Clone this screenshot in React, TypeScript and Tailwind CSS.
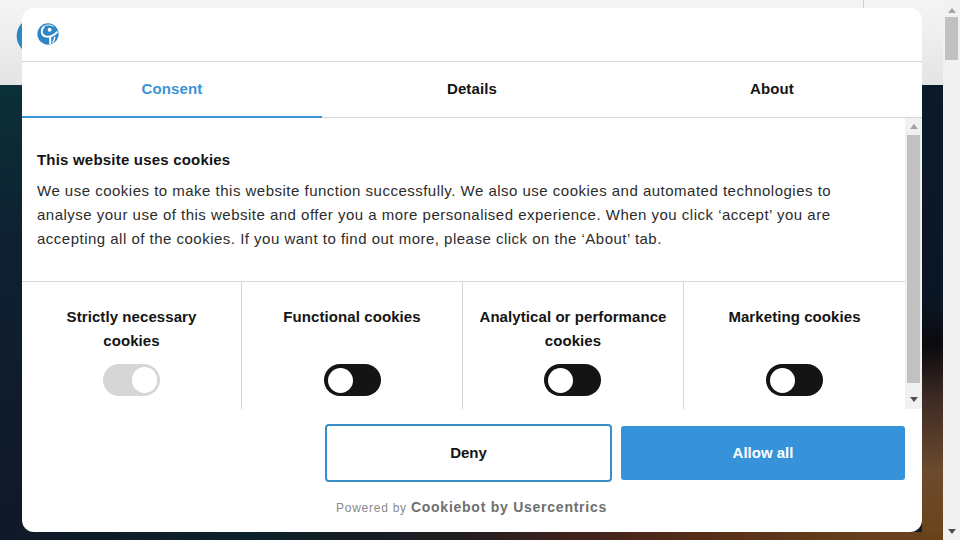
const Globe = ({ size, className }: { size: number; className?: string }) => (
  <svg width={size} height={size} viewBox="0 0 24 24" className={className} fill="none">
    <circle cx="12" cy="12" r="11.6" fill="#2f86c5" />
    <circle cx="13.8" cy="7.4" r="2.1" fill="#ffffff" />
    <path d="M8 3.6 C3.8 7 4.4 13.4 9 14.6 C13 15.6 18.4 13.8 22.4 9.4" stroke="#ffffff" strokeWidth="2" />
    <path d="M14.4 15 L14.4 23.2" stroke="#ffffff" strokeWidth="2.2" />
    <path d="M19.4 15 C19.2 17.6 18.4 19.6 17 21.4" stroke="#ffffff" strokeWidth="1.6" />
    <path d="M8 3.4 C11 1.6 15 1.8 18 3.6" stroke="#ffffff" strokeWidth="1" />
  </svg>
);

const Arrow = ({ up, className }: { up?: boolean; className?: string }) => (
  <svg width="8" height="5" viewBox="0 0 8 5" className={className}>
    <path d={up ? "M0 5 L4 0 L8 5 Z" : "M0 0 L8 0 L4 5 Z"} fill="currentColor" />
  </svg>
);

const Toggle = ({ on }: { on?: boolean }) =>
  on ? (
    <div className="w-[57px] h-8 rounded-full bg-[#d6d6d6] flex items-center justify-end pr-[3px]">
      <div className="w-[25px] h-[26px] rounded-full bg-white" />
    </div>
  ) : (
    <div className="w-[57px] h-8 rounded-full bg-[#141414] flex items-center pl-1">
      <div className="w-[25px] h-[25px] rounded-full bg-white" />
    </div>
  );

const cats: { title: string[]; on?: boolean; w: string; border: boolean; toggleClass: string }[] = [
  { title: ["Strictly necessary", "cookies"], on: true, w: "w-[220px]", border: true, toggleClass: "mt-[11px]" },
  { title: ["Functional cookies"], w: "w-[221px]", border: true, toggleClass: "mt-[11px]" },
  { title: ["Analytical or performance", "cookies"], w: "w-[221px]", border: true, toggleClass: "mt-[11px] mr-[1px]" },
  { title: ["Marketing cookies"], w: "w-[221px]", border: false, toggleClass: "mt-[11px]" },
];

export default function App() {
  return (
    <div
      className="relative w-[960px] h-[540px] overflow-hidden flex bg-[#f1f1f1] text-[#141414]"
      style={{ fontFamily: '"Liberation Sans", Arial, sans-serif' }}
    >
      <div className="w-[943px] flex flex-col">
        <div className="relative h-[85px] bg-gradient-to-b from-[#f5f5f5] to-[#e4e4e4]">
          <div className="absolute left-[16px] top-[17px]">
            <Globe size={38} />
          </div>
          <div className="absolute left-[863px] top-0 h-[10px] w-px bg-[#cfcfcf]" />
        </div>
        <div className="flex-1 bg-no-repeat bg-[image:linear-gradient(to_right,#10192a_0px,#0a2028_250px,#1f1d20_450px,#3c201c_560px,#552d18_700px,#643f1a_850px,#6a431c_943px),linear-gradient(#0c1a28_0px,#0b1624_215px,#0b0a0e_260px,#3e2b24_315px,#6b4a2e_385px,#6c431a_455px),linear-gradient(#0a3038_0px,#0f2030_165px,#101828_455px),linear-gradient(#0c1a28,#111a28)] bg-[length:100%_8px,21px_100%,22px_100%,100%_100%] bg-[position:left_bottom,right_top,left_top,left_top]" />
      </div>
      <div className="w-[17px] flex flex-col items-center bg-[#f1f1f1] text-[#a3a3a3]">
        <div className="h-[17px] flex items-center justify-center pt-1">
          <Arrow up />
        </div>
        <div className="w-[13px] h-[43px] bg-[#c1c1c1]" />
        <div className="flex-1" />
        <div className="h-[17px] flex items-center justify-center text-[#505050]">
          <Arrow />
        </div>
      </div>

      <div className="absolute left-[22px] top-[8px] w-[900px] h-[524px] bg-white rounded-xl flex flex-col overflow-hidden">
        <div className="h-[54px] shrink-0 flex items-center pl-[15px] pb-[1px] border-b border-[#d6d6d6]">
          <Globe size={22} />
        </div>
        <div className="h-[56px] shrink-0 flex border-b border-[#d6d6d6] text-[15px] font-bold tracking-[0.13px]">
          <div className="w-[300px] h-[56px] flex items-center justify-center text-[#3a94d8] border-b-2 border-[#3a94d8]">Consent</div>
          <div className="w-[300px] flex items-center justify-center">Details</div>
          <div className="w-[300px] flex items-center justify-center">About</div>
        </div>
        <div className="h-[291px] shrink-0 flex">
          <div className="w-[883px] flex flex-col">
            <div className="h-[164px] shrink-0 border-b border-[#d6d6d6] pl-[15px] pt-[29px]">
              <div className="text-[15px] leading-[26px] font-bold tracking-[0.2px]">This website uses cookies</div>
              <p className="mt-[6px] w-[830px] text-[15px] leading-6 tracking-[0.49px] text-[#2c2c2c]">
                We use cookies to make this website function successfully. We also use cookies and automated technologies to analyse your use of this website and offer you a more personalised experience. When you click ‘accept’ you are accepting all of the cookies. If you want to find out more, please click on the ‘About’ tab.
              </p>
            </div>
            <div className="flex-1 flex">
              {cats.map((c) => (
                <div
                  key={c.title[0]}
                  className={`${c.w} flex flex-col items-center pt-[23px] text-[15px] leading-6 font-bold tracking-[0.08px] ${c.border ? "border-r border-[#d6d6d6]" : ""}`}
                >
                  <div className="h-12 text-center">
                    {c.title.map((t) => (
                      <div key={t}>{t}</div>
                    ))}
                  </div>
                  <div className={c.toggleClass}>
                    <Toggle on={c.on} />
                  </div>
                </div>
              ))}
            </div>
          </div>
          <div className="w-[17px] flex flex-col items-center bg-[#f1f1f1]">
            <div className="h-[17px] flex items-center justify-center text-[#a3a3a3]">
              <Arrow up />
            </div>
            <div className="w-[13px] h-[248px] bg-[#c1c1c1]" />
            <div className="flex-1 flex items-center justify-center pt-[6px] text-[#505050]">
              <Arrow />
            </div>
          </div>
        </div>
        <div className="h-[88px] shrink-0 flex items-center justify-end pr-[17px] gap-[9px] text-[15px] font-bold">
          <div className="w-[287px] h-[58px] rounded border-2 border-[#3a8fc9] flex items-center justify-center">Deny</div>
          <div className="w-[284px] h-[54px] rounded-[3px] bg-[#3693da] text-white flex items-center justify-center">Allow all</div>
        </div>
        <div className="pl-[314px] flex items-baseline gap-[4px] text-[#8a8a8a] text-[12px] tracking-[0.75px]">
          <span>Powered by</span>
          <span className="text-[14px] font-bold text-[#6f6f6f]">Cookiebot by Usercentrics</span>
        </div>
      </div>
    </div>
  );
}
